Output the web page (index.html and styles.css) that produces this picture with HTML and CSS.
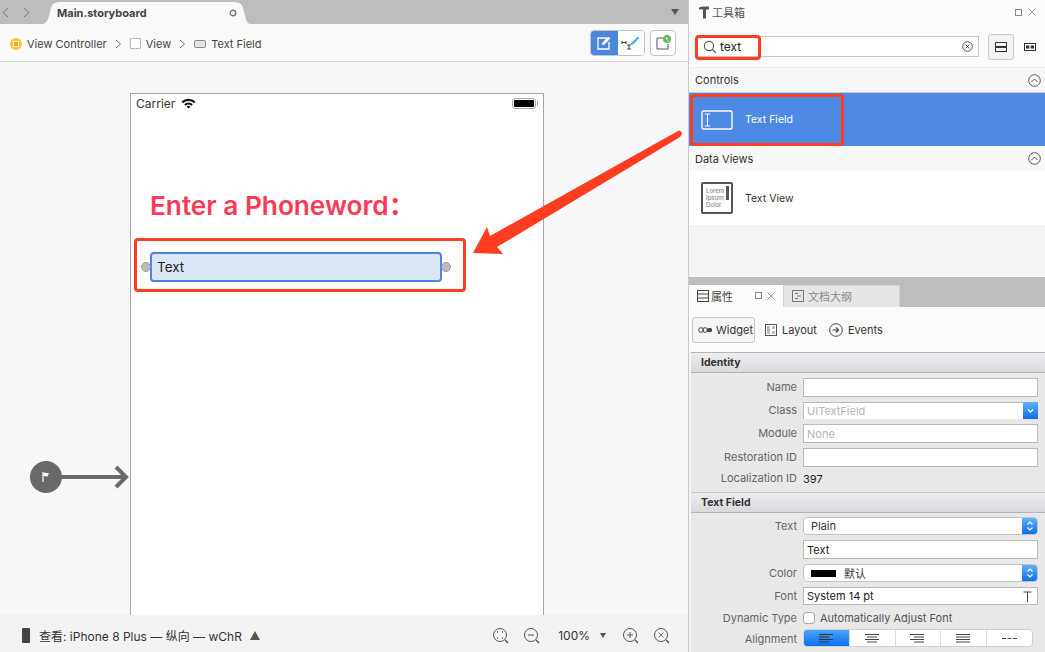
FILE: index.html
```html
<!DOCTYPE html>
<html lang="zh">
<head>
  <meta charset="UTF-8">
  <title>Main.storyboard</title>
  <link rel="stylesheet" href="styles.css">
</head>
<body>
<div class="window">

  <!-- Editor on the left -->
  <div class="editor">
    <div class="tabbar">
      <div class="nav-arrows">
        <svg width="30" height="14" viewBox="0 0 30 14"><path d="M8 3 3 7.500 8 12M24 3l5 4.500-5 4.500" fill="none" stroke="#777" stroke-width="1"/></svg>
      </div>
      <div class="file-tab">
        <span>Main.storyboard</span>
        <svg width="8" height="8" viewBox="0 0 8 8"><circle cx="4" cy="4" r="2.800" fill="none" stroke="#777" stroke-width="1.400"/></svg>
      </div>
      <div class="tabbar-menu"></div>
    </div>

    <div class="crumbbar">
      <svg class="crumb-icon" width="12" height="12" viewBox="0 0 12 12"><circle cx="6" cy="6" r="6" fill="#fbc640"/><rect x="3.500" y="3.500" width="5" height="5" fill="#f3a72b" stroke="#fde7a8"/></svg>
      <span class="crumb">View Controller</span>
      <svg class="crumb-sep" width="7" height="10" viewBox="0 0 7 10"><path d="M1 1l4.500 4L1 9" fill="none" stroke="#777"/></svg>
      <svg class="crumb-icon" width="11" height="11" viewBox="0 0 11 11"><rect x=".5" y=".5" width="10" height="10" fill="#fff" stroke="#aaa" stroke-dasharray="2 .5"/></svg>
      <span class="crumb">View</span>
      <svg class="crumb-sep" width="7" height="10" viewBox="0 0 7 10"><path d="M1 1l4.500 4L1 9" fill="none" stroke="#777"/></svg>
      <svg class="crumb-icon" width="12" height="8" viewBox="0 0 12 8"><rect x=".5" y=".5" width="11" height="7" rx="1" fill="#e4e4e4" stroke="#888"/></svg>
      <span class="crumb">Text Field</span>
      <div class="crumb-tools">
        <div class="segment">
          <div class="segment-on">
            <svg width="16" height="16" viewBox="0 0 16 16"><path d="M11 3H2v11h11V7" fill="none" stroke="#fff" stroke-width="1.300"/><path d="M6 10l.5-2.500L12.500 1.500l2 2L8.500 9.500z" fill="#fff"/></svg>
          </div>
          <div class="segment-off">
            <svg width="20" height="16" viewBox="0 0 20 16"><path d="M1 6v3M5 6v3M1 7.500h4M6 10h4M6 14h4M8 10v4" stroke="#444" stroke-width="1.100" fill="none"/><path d="M10 8l7-6.500 1.500 1.500L12 9.500l-2.500.5z" fill="#45b5e6"/></svg>
          </div>
        </div>
        <div class="tool-btn">
          <svg width="16" height="16" viewBox="0 0 16 16"><path d="M8 3H2v11h11V9" fill="none" stroke="#555" stroke-width="1"/><circle cx="12" cy="4" r="4" fill="#5cb85c"/><path d="M10 2l3 1-1 2zM13 5l1 1-2 1z" fill="#fff"/></svg>
        </div>
      </div>
    </div>

    <div class="canvas">
      <div class="phone">
        <div class="status">
          <span>Carrier</span>
          <svg width="15" height="11" viewBox="0 0 15 11"><path d="M.5 3.600a10 10 0 0 1 14 0L13 5.200a8 8 0 0 0-11 0zM3.200 6.300a6.200 6.200 0 0 1 8.600 0l-1.500 1.500a4 4 0 0 0-5.600 0zM5.600 8.600a2.800 2.800 0 0 1 3.800 0l-1.900 2z" fill="#111"/></svg>
          <span class="battery"><i></i></span>
        </div>
        <div class="phoneword">Enter a Phoneword：</div>
        <div class="field">
          <span class="handle handle-left"></span>
          <span>Text</span>
          <span class="handle handle-right"></span>
        </div>
      </div>

      <svg class="entry-arrow" width="104" height="36" viewBox="0 0 104 36">
        <circle cx="16" cy="18" r="16" fill="#696969"/>
        <path d="M32 18h64" stroke="#696969" stroke-width="4"/>
        <path d="M86 8l10 10-10 10" fill="none" stroke="#696969" stroke-width="4"/>
        <path d="M13 13v10" stroke="#fff" stroke-width="1.200"/>
        <path d="M13.500 13.500l6 1-2 1.500 1 1.500-5-.5z" fill="#fff"/>
      </svg>
    </div>

    <div class="devicebar">
      <span class="device-icon"></span>
      <span class="device-label">查看: iPhone 8 Plus — 纵向 — wChR</span>
      <span class="triangle-up"></span>
      <div class="zoom-tools">
        <svg width="18" height="18" viewBox="0 0 18 18"><circle cx="8" cy="8" r="6.500" fill="none" stroke="#555"/><path d="M13 13l3 3" stroke="#555" stroke-width="1.400"/><path d="M5 5h1M10 5h1M5 11h1M10 11h1" stroke="#555" stroke-width="1.400"/></svg>
        <svg width="18" height="18" viewBox="0 0 18 18"><circle cx="8" cy="8" r="6.500" fill="none" stroke="#555"/><path d="M13 13l3 3" stroke="#555" stroke-width="1.400"/><path d="M5 8h6" stroke="#555"/></svg>
        <span class="zoom-value">100%</span>
        <span class="triangle-down"></span>
        <svg width="18" height="18" viewBox="0 0 18 18"><circle cx="8" cy="8" r="6.500" fill="none" stroke="#555"/><path d="M13 13l3 3" stroke="#555" stroke-width="1.400"/><path d="M5 8h6M8 5v6" stroke="#555"/></svg>
        <svg width="18" height="18" viewBox="0 0 18 18"><circle cx="8" cy="8" r="6.500" fill="none" stroke="#555"/><path d="M13 13l3 3" stroke="#555" stroke-width="1.400"/><path d="M5.500 5.500l5 5M10.500 5.500l-5 5" stroke="#777"/></svg>
      </div>
    </div>
  </div>

  <!-- Toolbox and properties on the right -->
  <div class="side">
    <div class="pad-head">
      <svg width="10" height="13" viewBox="0 0 10 13"><path d="M0 1.500Q2 .5 5 .5h5v3H7v9H4v-9H2Q1 3 0 3.500z" fill="#555"/></svg>
      <span>工具箱</span>
      <div class="pad-actions">
        <span class="pad-square"></span>
        <svg width="8" height="8" viewBox="0 0 8 8"><path d="M.5.5l7 7M7.500.5l-7 7" stroke="#999"/></svg>
      </div>
    </div>

    <div class="searchrow">
      <div class="search">
        <svg width="14" height="14" viewBox="0 0 14 14"><circle cx="6" cy="6" r="4.600" fill="none" stroke="#555" stroke-width="1.100"/><path d="M9.500 9.500l3.500 3.500" stroke="#555" stroke-width="1.100"/></svg>
        <span class="search-text">text</span>
        <svg class="search-clear" width="11" height="11" viewBox="0 0 11 11"><circle cx="5.500" cy="5.500" r="4.800" fill="none" stroke="#555"/><path d="M3.500 3.500l4 4M7.500 3.500l-4 4" stroke="#555"/></svg>
      </div>
      <div class="view-btn">
        <svg width="12" height="10" viewBox="0 0 12 10"><rect x=".5" y=".5" width="11" height="9" fill="none" stroke="#333"/><rect x=".5" y="4" width="11" height="2" fill="#333"/></svg>
      </div>
      <svg class="view-alt" width="12" height="8" viewBox="0 0 12 8"><rect x=".5" y=".5" width="11" height="7" fill="none" stroke="#333"/><rect x="2" y="2.500" width="3.300" height="3" fill="#333"/><rect x="6.700" y="2.500" width="3.300" height="3" fill="#333"/></svg>
    </div>

    <div class="group-head group-first">
      <span>Controls</span>
      <svg width="13" height="13" viewBox="0 0 13 13"><circle cx="6.500" cy="6.500" r="5.800" fill="none" stroke="#555"/><path d="M3.500 8l3-3 3 3" fill="none" stroke="#555"/></svg>
    </div>
    <div class="tool-row tool-row-active">
      <svg width="32" height="20" viewBox="0 0 32 20"><rect x="1" y="1" width="30" height="18" rx="1.500" fill="none" stroke="#fff" stroke-width="1.400"/><path d="M4 4h5M4 16h5M6.500 4v12" stroke="#fff" stroke-width="1.200"/></svg>
      <span>Text Field</span>
    </div>
    <div class="group-head">
      <span>Data Views</span>
      <svg width="13" height="13" viewBox="0 0 13 13"><circle cx="6.500" cy="6.500" r="5.800" fill="none" stroke="#555"/><path d="M3.500 8l3-3 3 3" fill="none" stroke="#555"/></svg>
    </div>
    <div class="tool-row">
      <div class="textview-icon">
        <span>Lorem<br>Ipsum<br>Dolor</span>
        <i></i>
      </div>
      <span>Text View</span>
    </div>
    <div class="toolbox-rest"></div>

    <div class="pad-tabs">
      <div class="pad-tab pad-tab-on">
        <svg width="12" height="12" viewBox="0 0 12 12"><rect x=".5" y=".5" width="11" height="11" fill="none" stroke="#444"/><path d="M.5 4h11M.5 8h11" stroke="#444"/></svg>
        <span>属性</span>
        <span class="pad-square pad-square-tab"></span>
        <svg width="8" height="8" viewBox="0 0 8 8"><path d="M.5.5l7 7M7.500.5l-7 7" stroke="#999"/></svg>
      </div>
      <div class="pad-tab">
        <svg width="12" height="12" viewBox="0 0 12 12"><rect x=".5" y=".5" width="11" height="11" fill="none" stroke="#777"/><path d="M3 3.500h3M5 6h4M3 8.500h3" stroke="#777"/></svg>
        <span>文档大纲</span>
      </div>
    </div>

    <div class="prop-tabs">
      <div class="prop-tab prop-tab-on">
        <svg width="14" height="6" viewBox="0 0 14 6"><circle cx="3" cy="3" r="2.300" fill="none" stroke="#444"/><circle cx="7" cy="3" r="2.300" fill="none" stroke="#444"/><rect x="9" y="1" width="5" height="4" rx="1.500" fill="#444"/></svg>
        <span>Widget</span>
      </div>
      <div class="prop-tab">
        <svg width="12" height="12" viewBox="0 0 12 12"><rect x=".5" y=".5" width="11" height="11" fill="#fff" stroke="#555"/><path d="M2 2h3v8H2zM7 2h3v3H7zM7 7h3v3H7z" fill="#bbb"/></svg>
        <span>Layout</span>
      </div>
      <div class="prop-tab prop-tab-last">
        <svg width="14" height="14" viewBox="0 0 14 14"><circle cx="7" cy="7" r="6.300" fill="none" stroke="#444"/><path d="M3.500 7h6M7 4.500L9.500 7 7 9.500" fill="none" stroke="#444" stroke-width="1.200"/></svg>
        <span>Events</span>
      </div>
    </div>

    <div class="section-head">Identity</div>
    <div class="form form-identity">
      <label>Name</label>
      <div class="input"></div>
      <label>Class</label>
      <div class="input input-combo input-muted">UITextField<span class="combo-btn"><svg width="9" height="6" viewBox="0 0 9 6"><path d="M2 1.500l2.500 2.500L7 1.500" fill="none" stroke="#fff" stroke-width="1.300"/></svg></span></div>
      <label>Module</label>
      <div class="input input-muted">None</div>
      <label>Restoration ID</label>
      <div class="input"></div>
      <label>Localization ID</label>
      <div class="plain-value">397</div>
    </div>

    <div class="section-head section-head-2">Text Field</div>
    <div class="form form-text">
      <label>Text</label>
      <div class="select">Plain<span class="select-btn"><svg width="8" height="12" viewBox="0 0 8 12"><path d="M1.500 4.500L4 2l2.500 2.500M1.500 7.500L4 10l2.500-2.500" fill="none" stroke="#fff" stroke-width="1.200"/></svg></span></div>
      <label></label>
      <div class="input input-dark">Text</div>
      <label>Color</label>
      <div class="select"><i class="swatch"></i>默认<span class="select-btn"><svg width="8" height="12" viewBox="0 0 8 12"><path d="M1.500 4.500L4 2l2.500 2.500M1.500 7.500L4 10l2.500-2.500" fill="none" stroke="#fff" stroke-width="1.200"/></svg></span></div>
      <label>Font</label>
      <div class="input input-dark input-font">System 14 pt<svg width="9" height="11" viewBox="0 0 9 11"><path d="M.5 1h8M4.500 1v10" fill="none" stroke="#444"/></svg></div>
      <label>Dynamic Type</label>
      <div class="check-row"><span class="checkbox"></span>Automatically Adjust Font</div>
      <label>Alignment</label>
      <div class="align-group">
        <div class="align-btn align-btn-on"><svg width="15" height="9" viewBox="0 0 15 9"><path d="M0 .5h14M0 3h10M0 5.500h14M0 8h10" stroke="#333"/></svg></div>
        <div class="align-btn"><svg width="15" height="9" viewBox="0 0 15 9"><path d="M0 .5h14M2 3h10M0 5.500h14M2 8h10" stroke="#444"/></svg></div>
        <div class="align-btn"><svg width="15" height="9" viewBox="0 0 15 9"><path d="M0 .5h14M4 3h10M0 5.500h14M4 8h10" stroke="#444"/></svg></div>
        <div class="align-btn"><svg width="15" height="9" viewBox="0 0 15 9"><path d="M0 .5h14M0 3h14M0 5.500h14M0 8h14" stroke="#444"/></svg></div>
        <div class="align-btn"><svg width="15" height="3" viewBox="0 0 15 3"><path d="M0 1.500h4M5.500 1.500h4M11 1.500h4" stroke="#444"/></svg></div>
      </div>
    </div>
  </div>

  <!-- Red marks drawn over the screenshot -->
  <div class="mark mark-search"></div>
  <div class="mark mark-tool"></div>
  <div class="mark mark-field"></div>
  <svg class="mark-arrow" width="1045" height="652" viewBox="0 0 1045 652">
    <path d="M473 253 487 227 490 236 678 131Q681 130 682 133 682 135 680 137L497 247 503 254z" fill="#fc3d1f"/>
  </svg>
</div>
</body>
</html>
```

FILE: styles.css
```css
* {
  box-sizing: border-box;
}

body {
  margin: 0;
  font-family: "Inter", "Noto Sans CJK SC", sans-serif;
  font-size: 11px;
  color: #333;
}

.window {
  position: relative;
  display: flex;
  width: 1045px;
  height: 652px;
  overflow: hidden;
}

/* Editor */
.editor {
  display: flex;
  flex-direction: column;
  width: 689px;
  height: 652px;
  border-right: 1px solid #c9c9c9;
}

.tabbar {
  display: flex;
  height: 24px;
  background-color: #bdbdbd;
}

.nav-arrows {
  width: 42px;
  padding-top: 5px;
}

.nav-arrows svg {
  display: block;
}

.file-tab {
  display: flex;
  align-items: center;
  justify-content: space-between;
  width: 208px;
  margin-top: 2px;
  padding: 0 13px 0 15px;
  background-color: #f9f9f9;
  clip-path: path("M0 22Q5 22 7 14L9 6Q10 0 18 0L192 0Q200 0 201 6L203 14Q205 22 208 22Z");
  font-weight: 700;
  color: #444;
}

.tabbar-menu {
  width: 0;
  height: 0;
  margin: 9px 0 0 421px;
  border-left: 4px solid transparent;
  border-right: 4px solid transparent;
  border-top: 6px solid #555;
}

.crumbbar {
  display: flex;
  align-items: center;
  height: 38px;
  padding: 2px 0 0 10px;
  background-color: #f9f9f9;
  border-bottom: 1px solid #d6d6d6;
}

.crumb {
  margin-left: 5px;
  color: #444;
}

.crumb-sep {
  margin: 0 8px 0 8px;
}

.crumb-tools {
  display: flex;
  gap: 5px;
  margin: -2px 12px 0 auto;
}

.segment {
  display: flex;
  width: 55px;
  height: 26px;
  border: 1px solid #c4c4c4;
  border-radius: 4px;
  overflow: hidden;
}

.segment-on,
.segment-off {
  display: flex;
  align-items: center;
  justify-content: center;
  width: 50%;
}

.segment-on {
  background-color: #4a86dc;
}

.segment-off {
  background-color: #fff;
}

.tool-btn {
  display: flex;
  align-items: center;
  justify-content: center;
  width: 26px;
  height: 26px;
  background-color: #fff;
  border: 1px solid #c4c4c4;
  border-radius: 4px;
}

.canvas {
  position: relative;
  flex: 1;
  padding: 31px 0 0 130px;
  background-color: #f8f8f8;
  overflow: hidden;
}

.phone {
  width: 414px;
  height: 736px;
  background-color: #fff;
  border: 1px solid #a5a5a5;
}

.status {
  display: flex;
  align-items: center;
  gap: 6px;
  height: 18px;
  padding: 0 7px 0 5px;
  font-size: 12px;
  color: #333;
}

.battery {
  position: relative;
  width: 24px;
  height: 11px;
  margin-left: auto;
  padding: 1px;
  background-color: #fff;
  border: 1px solid #aaa;
  border-radius: 3px;
}

.battery::after {
  content: "";
  position: absolute;
  top: 2px;
  right: -3px;
  width: 1px;
  height: 5px;
  background-color: #aaa;
}

.battery i {
  display: block;
  height: 100%;
  background-color: #000;
  border-radius: 1px;
}

.phoneword {
  margin: 78px 0 0 19px;
  font-size: 26.200px;
  font-weight: 600;
  line-height: 32px;
  white-space: nowrap;
  color: #fb3a57;
}

.field {
  position: relative;
  display: flex;
  align-items: center;
  width: 292px;
  height: 30px;
  margin: 30px 0 0 19px;
  padding-left: 5px;
  background-color: #dbe7f7;
  border: 2px solid #4a86e0;
  border-radius: 4px;
  font-size: 13.500px;
  color: #222;
}

.handle {
  position: absolute;
  top: 8px;
  width: 10px;
  height: 10px;
  background-color: #bcbcbc;
  border: 1px solid #999;
  border-radius: 50%;
}

.handle-left {
  left: -11px;
}

.handle-right {
  right: -11px;
}

.entry-arrow {
  position: absolute;
  left: 30px;
  top: 397px;
}

.devicebar {
  display: flex;
  align-items: center;
  height: 37px;
  padding: 4px 17px 0 22px;
  background-color: #f3f3f3;
}

.device-icon {
  width: 8px;
  height: 15px;
  background-color: #444;
  border-radius: 1px;
}

.device-label {
  margin-left: 9px;
  font-size: 12px;
  color: #333;
  white-space: nowrap;
}

.triangle-up {
  width: 0;
  height: 0;
  margin-left: 8px;
  border-left: 5px solid transparent;
  border-right: 5px solid transparent;
  border-bottom: 9px solid #555;
}

.zoom-tools {
  display: flex;
  align-items: center;
  margin-left: auto;
}

.zoom-tools svg {
  margin-left: 13px;
}

.zoom-value {
  margin-left: 17px;
  font-size: 12px;
}

.triangle-down {
  width: 0;
  height: 0;
  margin: 0 3px 0 10px;
  border-left: 3.500px solid transparent;
  border-right: 3.500px solid transparent;
  border-top: 5px solid #555;
}

/* Right column */
.side {
  display: flex;
  flex-direction: column;
  width: 356px;
  background-color: #f4f4f4;
}

.pad-head {
  display: flex;
  align-items: center;
  gap: 3px;
  height: 24px;
  padding: 0 9px 0 10px;
  background-color: #fbfbfb;
  color: #555;
}

.pad-actions {
  display: flex;
  align-items: center;
  gap: 6px;
  margin-left: auto;
}

.pad-square {
  width: 7px;
  height: 7px;
  border: 1px solid #888;
}

.searchrow {
  display: flex;
  align-items: center;
  height: 44px;
  padding: 2px 9px 0 8px;
  background-color: #fbfbfb;
  border-bottom: 1px solid #eee;
}

.search {
  display: flex;
  align-items: center;
  width: 282px;
  height: 21px;
  padding: 0 5px 0 5px;
  background-color: #fff;
  border: 1px solid #c6c6c6;
}

.search-text {
  margin-left: 3px;
  font-size: 12px;
  color: #222;
}

.search-clear {
  margin-left: auto;
}

.view-btn {
  display: flex;
  align-items: center;
  justify-content: center;
  width: 26px;
  height: 26px;
  margin-left: 9px;
  background-color: #f3f3f3;
  border: 1px solid #c8c8c8;
  border-radius: 3px;
}

.view-alt {
  margin-left: 10px;
}

.group-head {
  display: flex;
  align-items: center;
  justify-content: space-between;
  height: 25px;
  padding: 0 4px 0 6px;
  background-color: #f8f8f8;
  color: #333;
}

.group-first {
  height: 25px;
  border-bottom: 1px solid #c8c8c8;
}

.tool-row {
  display: flex;
  align-items: center;
  gap: 12px;
  height: 54px;
  padding-left: 12px;
  background-color: #fff;
  font-size: 10.500px;
  color: #333;
}

.tool-row-active {
  height: 53px;
  background-color: #4e89e3;
  color: #fff;
}

.textview-icon {
  position: relative;
  width: 32px;
  height: 32px;
  padding: 3px;
  border: 2px solid #555;
  border-radius: 2px;
  font-size: 6px;
  font-weight: 500;
  line-height: 7px;
  color: #888;
}

.textview-icon i {
  position: absolute;
  top: 2px;
  right: 2px;
  width: 3px;
  height: 14px;
  background-color: #555;
}

.toolbox-rest {
  flex: 1;
}

.pad-tabs {
  display: flex;
  height: 30px;
  background-color: #bdbdbd;
}

.pad-tab {
  display: flex;
  align-items: center;
  gap: 4px;
  width: 117px;
  margin-top: 8px;
  padding: 0 0 1px 8px;
  background-color: #e6e6e6;
  border: 1px solid #d4d4d4;
  border-bottom: 0;
  color: #888;
}

.pad-tab-on {
  width: 94px;
  gap: 2px;
  background-color: #fbfbfb;
  border: 0;
  color: #444;
}

.pad-square-tab {
  margin-left: 20px;
  margin-right: 3px;
}

.prop-tabs {
  display: flex;
  align-items: center;
  gap: 10px;
  height: 45px;
  padding: 0 3px;
  background-color: #fbfbfb;
}

.prop-tab {
  display: flex;
  align-items: center;
  gap: 5px;
  color: #333;
}

.prop-tab-on {
  width: 63px;
  height: 26px;
  gap: 4px;
  padding-left: 5px;
  background-color: #f5f5f5;
  border: 1px solid #c8c8c8;
  border-radius: 3px;
}

.prop-tab-last {
  margin-left: 2px;
}

.section-head {
  height: 21px;
  margin-left: 2px;
  padding-left: 10px;
  background: linear-gradient(#eeeef1, #d9d9dd);
  border-top: 1px solid #b5b5b5;
  border-bottom: 1px solid #b5b5b5;
  font-weight: 700;
  font-size: 10.500px;
  line-height: 20px;
  color: #333;
}

.section-head-2 {
  border-top-color: #c8c8c8;
  line-height: 19px;
}

.form {
  display: grid;
  grid-template-columns: 106px 235px;
  column-gap: 6px;
  row-gap: 5px;
  margin-left: 2px;
  padding-top: 5px;
  background-color: #e8e8e8;
}

.form-identity {
  grid-template-rows: 19px 17px 19px 19px 14px;
  height: 119px;
}

.form-text {
  grid-template-rows: 18px 19px 18px 18px 15px 18px;
  height: 139px;
  padding-top: 4px;
}

.form label {
  align-self: center;
  text-align: right;
  color: #666;
  white-space: nowrap;
}

.form-identity label {
  margin-top: -2px;
}

.input {
  display: flex;
  align-items: center;
  padding-left: 3px;
  background-color: #fff;
  border: 1px solid #bbb;
  color: #aaa;
  white-space: nowrap;
}

.input-muted {
  color: #b5b5b5;
}

.input-dark {
  color: #222;
}

.input-combo {
  position: relative;
  border-bottom: 0;
}

.combo-btn,
.select-btn {
  position: absolute;
  top: 0;
  right: 0;
  bottom: 0;
  display: flex;
  align-items: center;
  justify-content: center;
  width: 15px;
  background: linear-gradient(#62b1fb, #0a6fea);
}

.input-combo .combo-btn {
  top: -1px;
  right: -1px;
}

.plain-value {
  align-self: center;
  color: #222;
}

.select {
  position: relative;
  display: flex;
  align-items: center;
  padding-left: 7px;
  background-color: #fff;
  border: 1px solid #c4c4c4;
  border-radius: 4px;
  overflow: hidden;
  color: #333;
}

.swatch {
  width: 25px;
  height: 7px;
  margin-right: 8px;
  background-color: #000;
}

.input-font {
  justify-content: space-between;
  padding-right: 5px;
}

.check-row {
  display: flex;
  align-items: center;
  gap: 5px;
  color: #555;
  white-space: nowrap;
}

.checkbox {
  width: 12px;
  height: 12px;
  background-color: #fff;
  border: 1px solid #aaa;
  border-radius: 3px;
}

.align-group {
  display: flex;
  width: 230px;
  height: 18px;
  margin-top: -1px;
  background-color: #fff;
  border: 1px solid #d0d0d0;
  border-radius: 4px;
  overflow: hidden;
}

.align-btn {
  display: flex;
  align-items: center;
  justify-content: center;
  flex: 1;
  border-left: 1px solid #ddd;
}

.align-btn-on {
  background: linear-gradient(#4ba3f9, #0a6fea);
  border-left: 0;
}

/* Red marks */
.mark {
  position: absolute;
  border: 3px solid #fc3d1f;
  border-radius: 4px;
}

.mark-search {
  left: 695px;
  top: 35px;
  width: 66px;
  height: 25px;
}

.mark-tool {
  left: 690px;
  top: 94px;
  width: 154px;
  height: 52px;
}

.mark-field {
  left: 134px;
  top: 238px;
  width: 332px;
  height: 54px;
}

.mark-arrow {
  position: absolute;
  left: 0;
  top: 0;
  pointer-events: none;
}
```
